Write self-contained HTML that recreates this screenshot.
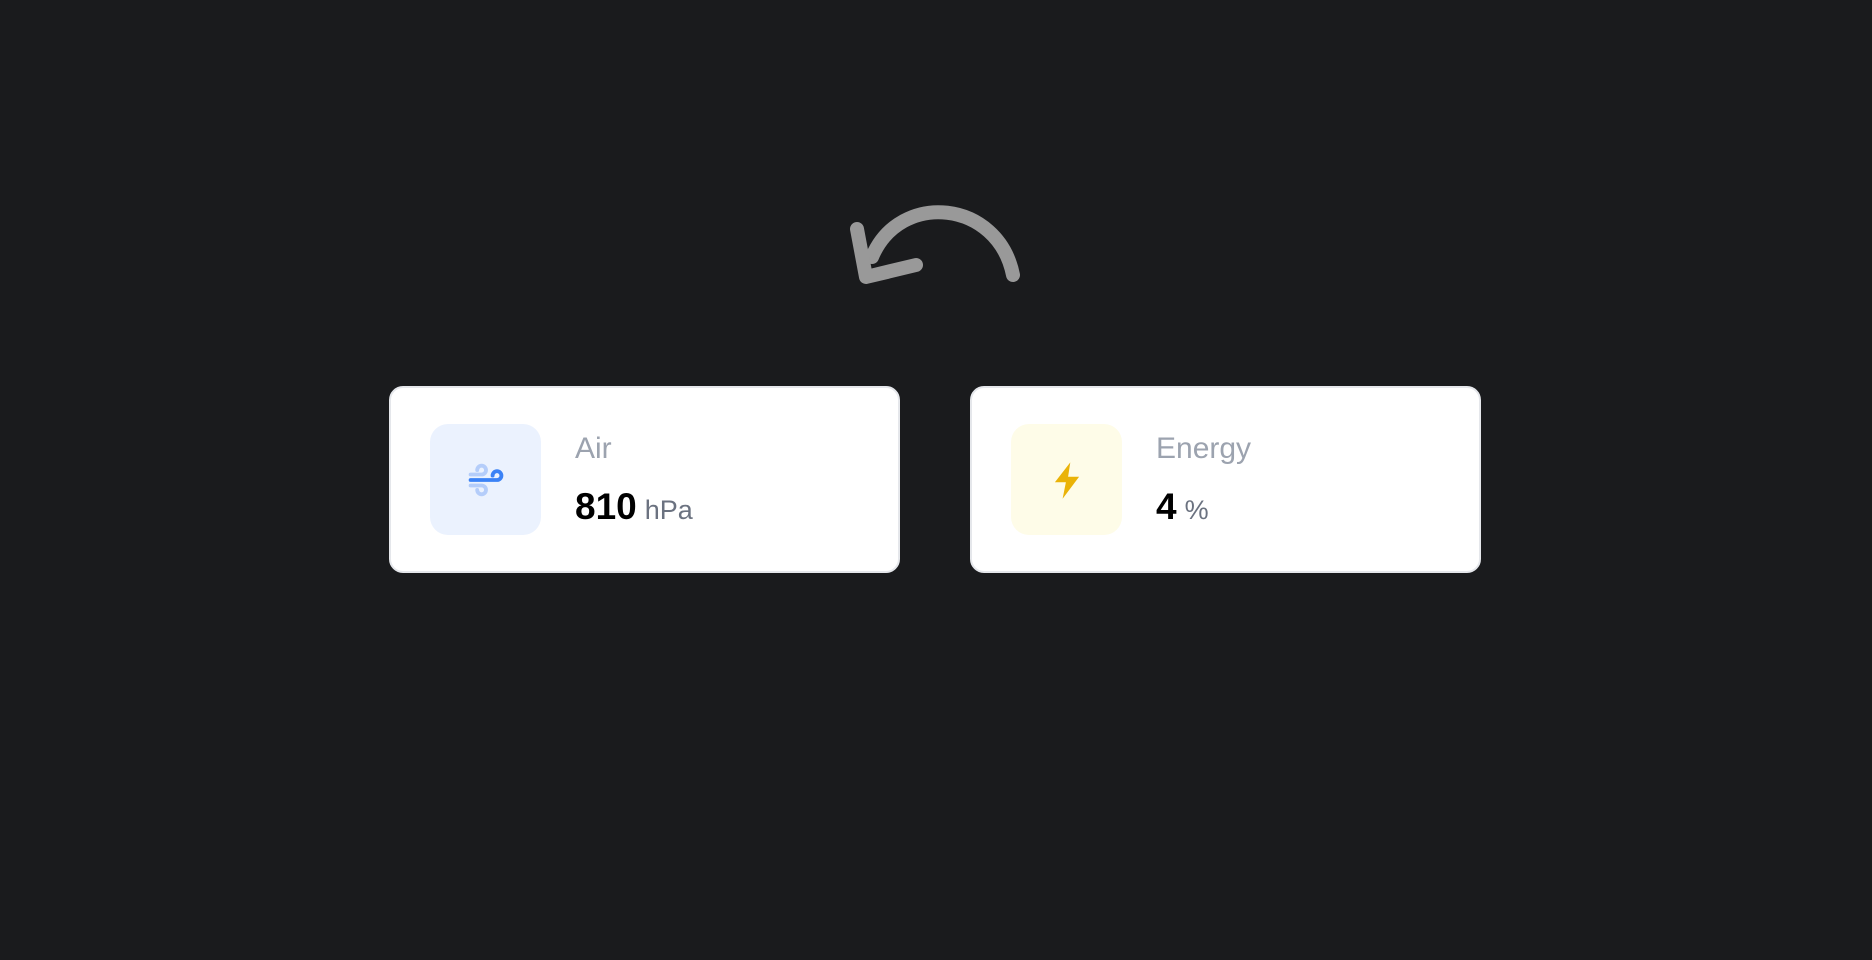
<!DOCTYPE html>
<html><head><style>
body{margin:0;width:1872px;height:960px;background:#1a1b1d;font-family:"Liberation Sans",sans-serif;position:relative;overflow:hidden}
.card{position:absolute;top:386px;width:511px;height:187px;background:#fff;border:2px solid #e5e7eb;border-radius:14px;box-sizing:border-box}
.ib{position:absolute;left:39px;top:36px;width:111px;height:111px;border-radius:18px;display:flex;align-items:center;justify-content:center}
.lbl{position:absolute;left:184px;top:44px;font-size:30px;color:#9ca3af}
.val{position:absolute;left:184px;top:98px;font-size:37px;font-weight:bold;color:#000}
.val span{font-size:27px;font-weight:normal;color:#6b7280;margin-left:8px}
</style></head><body>
<svg style="position:absolute;left:0;top:0" width="1872" height="960">
<path d="M1013 275 C 998 200 900 190 872 257" fill="none" stroke="#999" stroke-width="14" stroke-linecap="round"/>
<path d="M857 229 L866 277 L916 265" fill="none" stroke="#999" stroke-width="14" stroke-linecap="round" stroke-linejoin="round"/>
</svg>
<div class="card" style="left:389px">
<div class="ib" style="background:#ebf2fe">
<svg width="44" height="44" viewBox="0 0 40 40">
<path d="M6 15 H16 A4 4 0 1 0 12 11" fill="none" stroke="#b4cdfa" stroke-width="3.5" stroke-linecap="round"/>
<path d="M6 25 H16 A4 4 0 1 1 12 29" fill="none" stroke="#b4cdfa" stroke-width="3.5" stroke-linecap="round"/>
<path d="M6 20 H30 A4 4 0 1 0 26 16" fill="none" stroke="#3b82f6" stroke-width="3.5" stroke-linecap="round"/>
</svg></div>
<div class="lbl">Air</div>
<div class="val">810<span>hPa</span></div>
</div>
<div class="card" style="left:970px">
<div class="ib" style="background:#fefce8">
<svg width="44" height="44" viewBox="0 0 40 40"><path d="M23 4 L9 22 H19 L16 37 L31 17 H21 Z" fill="#eab308"/></svg></div>
<div class="lbl">Energy</div>
<div class="val">4<span>%</span></div>
</div>
</body></html>
